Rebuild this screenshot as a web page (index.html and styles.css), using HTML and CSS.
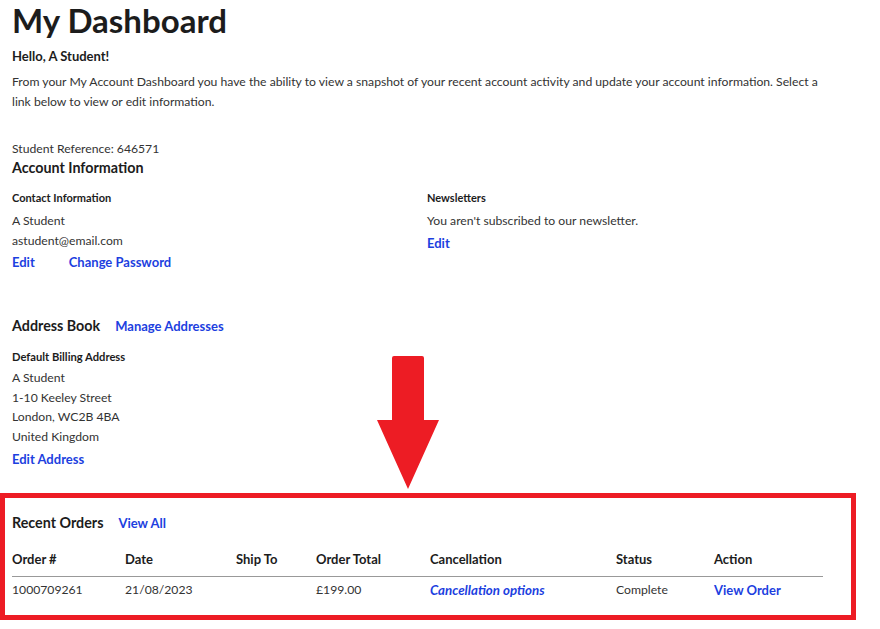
FILE: index.html
```html
<!DOCTYPE html>
<html lang="en">
<head>
<meta charset="utf-8">
<title>My Dashboard</title>
<link rel="stylesheet" href="styles.css">
</head>
<body>
<main class="page">
  <h1 class="title">My Dashboard</h1>
  <p class="hello">Hello, A Student!</p>
  <p class="intro">From your My Account Dashboard you have the ability to view a snapshot of your recent account activity and update your account information. Select a link below to view or edit information.</p>

  <p class="ref">Student Reference: 646571</p>
  <section class="account">
    <h2 class="section-title">Account Information</h2>
    <div class="cols">
      <div class="box">
        <h3 class="box-title">Contact Information</h3>
        <p class="line">A Student</p>
        <p class="line">astudent@email.com</p>
        <div class="actions">
          <a href="#" class="link">Edit</a>
          <a href="#" class="link">Change Password</a>
        </div>
      </div>
      <div class="box">
        <h3 class="box-title">Newsletters</h3>
        <p class="line">You aren't subscribed to our newsletter.</p>
        <div class="actions">
          <a href="#" class="link">Edit</a>
        </div>
      </div>
    </div>
  </section>

  <section class="address">
    <div class="head-row">
      <h2 class="section-title">Address Book</h2>
      <a href="#" class="link">Manage Addresses</a>
    </div>
    <h3 class="box-title billing">Default Billing Address</h3>
    <address class="addr">
      A Student<br>
      1-10 Keeley Street<br>
      London, WC2B 4BA<br>
      United Kingdom
    </address>
    <div class="actions addr-actions">
      <a href="#" class="link">Edit Address</a>
    </div>
  </section>

  <section class="orders">
    <div class="head-row">
      <h2 class="section-title">Recent Orders</h2>
      <a href="#" class="link">View All</a>
    </div>
    <table class="order-table">
      <thead>
        <tr>
          <th class="c1">Order #</th>
          <th class="c2">Date</th>
          <th class="c3">Ship To</th>
          <th class="c4">Order Total</th>
          <th class="c5">Cancellation</th>
          <th class="c6">Status</th>
          <th class="c7">Action</th>
        </tr>
      </thead>
      <tbody>
        <tr>
          <td>1000709261</td>
          <td>21/08/2023</td>
          <td></td>
          <td>£199.00</td>
          <td><a href="#" class="link italic">Cancellation options</a></td>
          <td>Complete</td>
          <td><a href="#" class="link">View Order</a></td>
        </tr>
      </tbody>
    </table>
  </section>
</main>

<div class="highlight-frame" aria-hidden="true"></div>
<svg class="arrow" width="64" height="134" viewBox="0 0 64 134" aria-hidden="true">
  <path d="M16 2 Q16 0 18 0 L46 0 Q48 0 48 2 L48 64 L63 64 L32 133 L1 64 L16 64 Z" fill="#ed1c24"/>
</svg>
</body>
</html>
```

FILE: styles.css
```css
* { box-sizing: border-box; }

html, body {
  margin: 0;
  padding: 0;
  background: #ffffff;
}

body {
  position: relative;
  width: 880px;
  height: 629px;
  overflow: hidden;
  font-family: Lato, "Noto Sans", "Liberation Sans", sans-serif;
  font-size: 12.2px;
  color: #333333;
}

.page {
  width: 832px;
  padding: 0 0 0 12px;
}

.title {
  margin: 0;
  font-size: 33px;
  line-height: 40px;
  font-weight: 700;
  color: #1c1c1c;
}

.hello {
  margin: 6px 0 0;
  font-size: 13px;
  line-height: 20px;
  font-weight: 700;
  color: #1c1c1c;
}

.intro {
  margin: 6px 0 0;
  line-height: 19.5px;
}

.ref {
  margin: 28px 0 0;
  line-height: 20px;
}

.section-title {
  margin: 0;
  font-size: 14.3px;
  line-height: 18px;
  font-weight: 700;
  color: #1c1c1c;
}

.cols {
  display: grid;
  grid-template-columns: 415px 1fr;
  margin-top: 12px;
}

.box-title {
  margin: 0 0 4px;
  font-size: 11px;
  line-height: 18px;
  font-weight: 700;
  color: #1c1c1c;
}

.line {
  margin: 0;
  line-height: 19.5px;
}

.actions {
  display: flex;
  gap: 34px;
  margin-top: 2px;
  line-height: 20px;
  font-size: 13px;
}

.link {
  color: #1d3fe0;
  font-weight: 700;
  font-size: 13px;
  text-decoration: none;
}

.italic { font-style: italic; font-size: 13.3px; }

.address {
  margin-top: 44px;
}

.head-row {
  display: flex;
  align-items: baseline;
  gap: 15px;
  line-height: 20px;
}

.head-row .section-title { line-height: 20px; }

.billing {
  margin-top: 12px;
  margin-bottom: 2px;
  font-size: 11.2px;
}

.addr {
  font-style: normal;
  line-height: 19.5px;
}

.addr-actions { margin-top: 3px; }

.orders {
  margin-top: 44px;
}

.order-table {
  margin-top: 16px;
  width: 811px;
  border-collapse: collapse;
  table-layout: fixed;
}

.order-table th {
  text-align: left;
  font-weight: 700;
  font-size: 13px;
  color: #1c1c1c;
  padding: 0 0 7px;
  line-height: 20px;
  border-bottom: 1px solid #999999;
}

.order-table td {
  padding: 3px 0 0;
  line-height: 20px;
  vertical-align: top;
}

.c1 { width: 113px; }
.c2 { width: 111px; }
.c3 { width: 80px; }
.c4 { width: 114px; }
.c5 { width: 186px; }
.c6 { width: 98px; }
.c7 { width: 109px; }

.highlight-frame {
  position: absolute;
  left: 0;
  top: 493px;
  width: 856px;
  height: 127px;
  border: 5px solid #ed1c24;
  pointer-events: none;
}

.arrow {
  position: absolute;
  left: 376px;
  top: 356px;
  pointer-events: none;
}
```
